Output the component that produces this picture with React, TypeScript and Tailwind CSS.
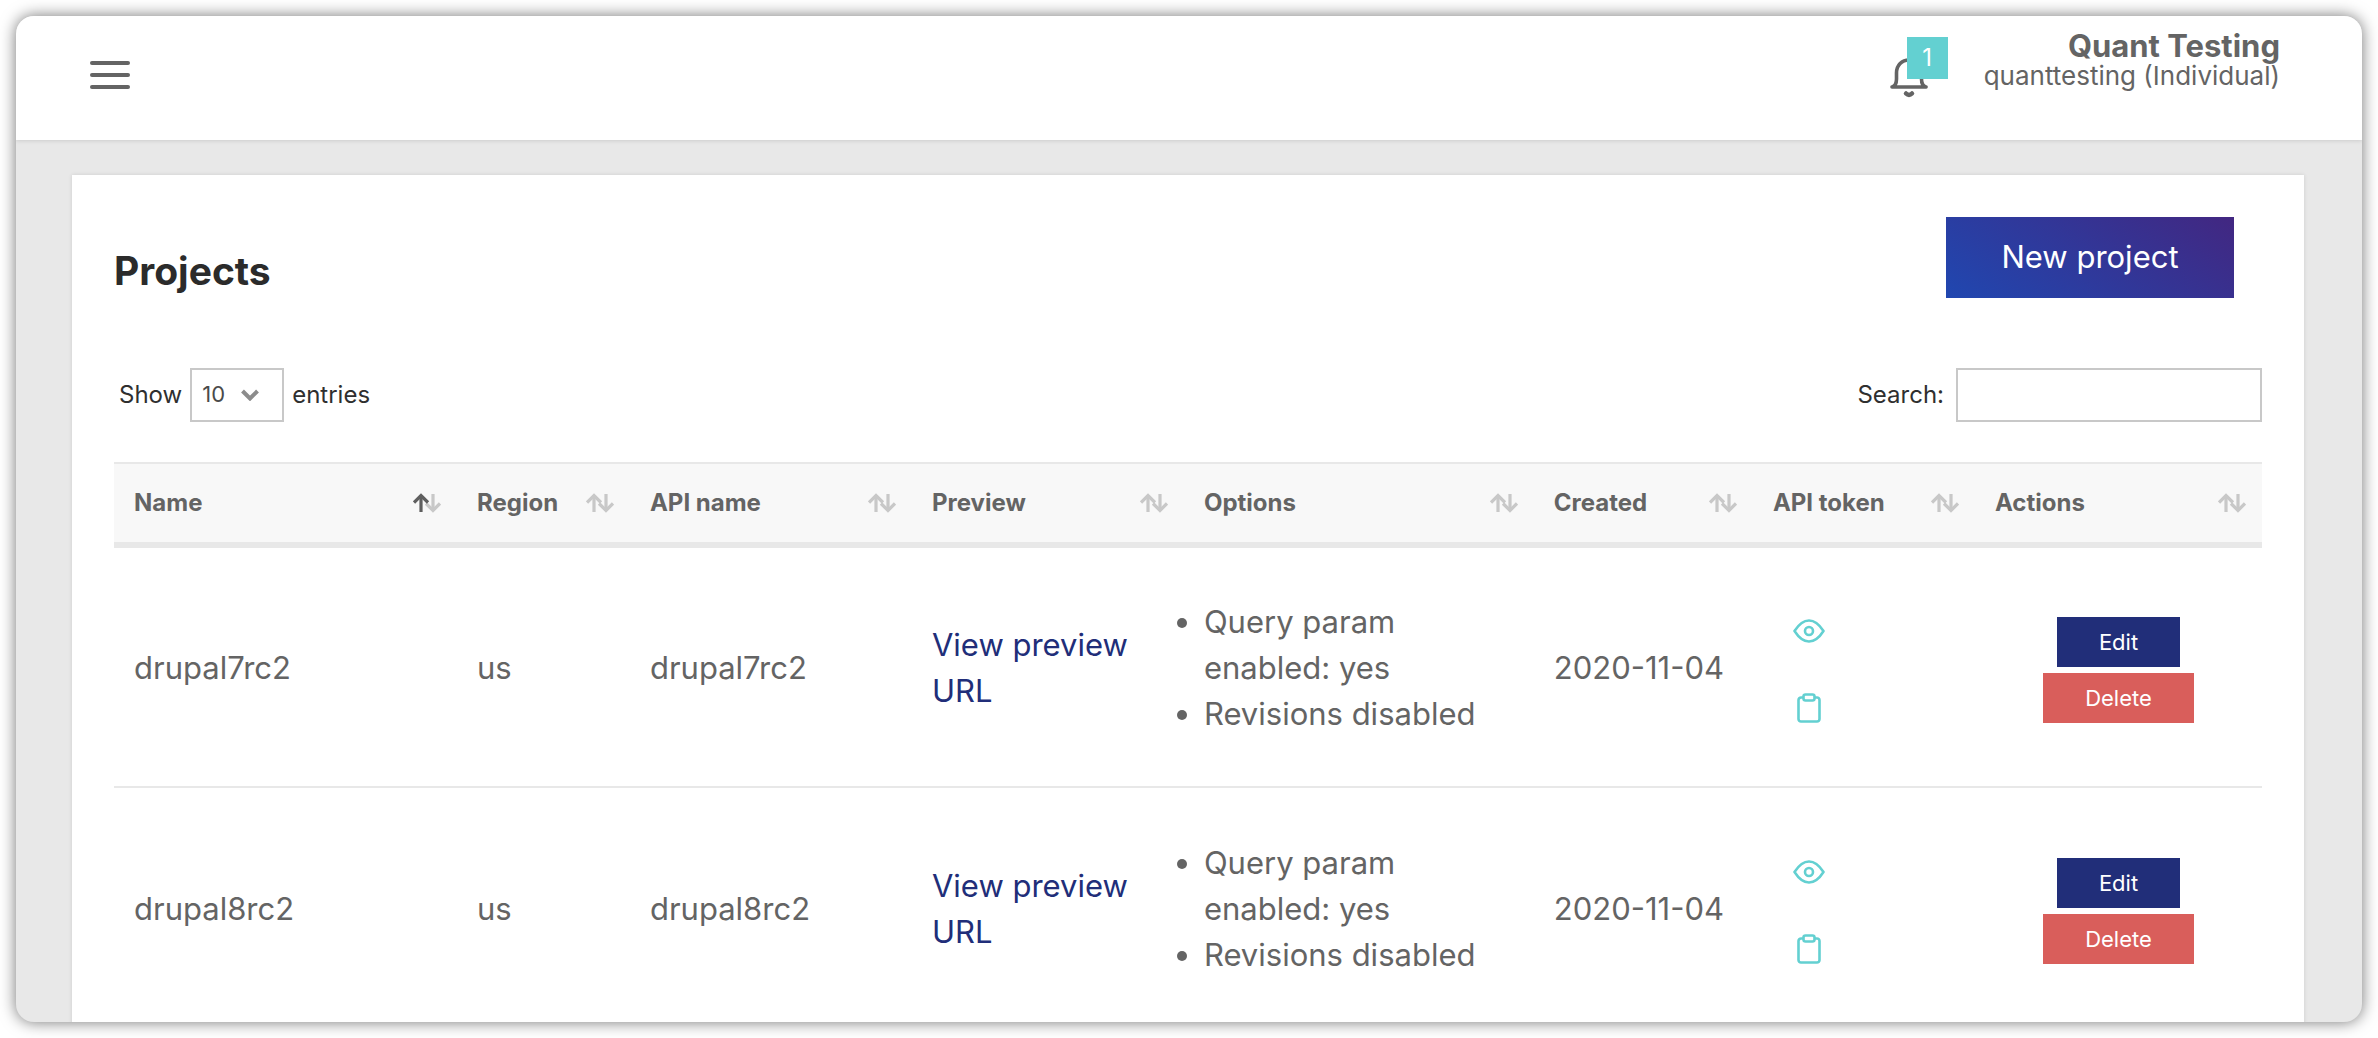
const columns = [
  { label: "Name", width: "w-[15.97%]", sorted: true },
  { label: "Region", width: "w-[8.05%]" },
  { label: "API name", width: "w-[13.13%]" },
  { label: "Preview", width: "w-[12.66%]" },
  { label: "Options", width: "w-[16.29%]" },
  { label: "Created", width: "w-[10.2%]" },
  { label: "API token", width: "w-[10.34%]" },
  { label: "Actions", width: "w-[13.36%]" },
];

const projects = [
  { name: "drupal7rc2", region: "us", api: "drupal7rc2", created: "2020-11-04" },
  { name: "drupal8rc2", region: "us", api: "drupal8rc2", created: "2020-11-04" },
];

function SortIcon({ active }: { active?: boolean }) {
  return (
    <svg viewBox="0 0 28 20" className="h-5 w-7 shrink-0" fill="none" strokeWidth="3.2" aria-hidden="true">
      <g stroke="#c8c8c8">
        <path d="M20 1V18" />
        <path d="M13 10.5L20 17.5L27 10.5" />
      </g>
      <g stroke={active ? "#5f5f5f" : "#c8c8c8"}>
        <path d="M8 19V2" />
        <path d="M1 9.5L8 2.5L15 9.5" />
      </g>
    </svg>
  );
}

function EyeIcon() {
  return (
    <svg viewBox="0 0 32 24" className="h-6 w-8" fill="none" stroke="#63d0d1" strokeWidth="2.6" aria-hidden="true">
      <path d="M1.5 12C6 5 10.5 1.500 16 1.500S26 5 30.500 12C26 19 21.500 22.500 16 22.500S6 19 1.500 12Z" strokeLinejoin="round" />
      <circle cx="16" cy="12" r="4" />
    </svg>
  );
}

function ClipboardIcon() {
  return (
    <svg viewBox="0 0 24 30" className="h-[30px] w-6" fill="none" stroke="#63d0d1" strokeWidth="2.6" aria-hidden="true">
      <path d="M6.500 4.500H4A2.500 2.500 0 0 0 1.500 7V26A2.500 2.500 0 0 0 4 28.500H20A2.500 2.500 0 0 0 22.500 26V7A2.500 2.500 0 0 0 20 4.500H17.500" />
      <rect x="6.500" y="1.500" width="11" height="6" rx="2" />
    </svg>
  );
}

function BellIcon() {
  return (
    <svg viewBox="0 0 38 40" className="h-10 w-[38px]" fill="none" stroke="#646464" strokeWidth="3.6" strokeLinecap="round" strokeLinejoin="round" aria-hidden="true">
      <path d="M2 29C6 28 6.500 25 6.500 21V15C6.500 7 12 2 19 2S31.500 7 31.500 15V21C31.500 25 32 28 36 29Z" />
      <path d="M16 35.500Q19 38.500 22 35.500" strokeWidth="4.500" />
    </svg>
  );
}

export default function App() {
  return (
    <div className="h-screen bg-white p-4 font-['Inter',sans-serif] text-[#646464]">
      <div className="flex h-full flex-col overflow-hidden rounded-[18px] bg-[#e8e8e8] shadow-[0_0_16px_rgba(0,0,0,0.55)]">
        <header className="flex h-[124px] shrink-0 items-start justify-between bg-white pr-[82px] pl-[74px] shadow-[0_1px_4px_rgba(0,0,0,0.12)]">
          <button type="button" aria-label="Menu" className="mt-[45px] flex w-10 flex-col gap-2">
            <span className="h-1 w-full rounded-full bg-[#646464]" />
            <span className="h-1 w-full rounded-full bg-[#646464]" />
            <span className="h-1 w-full rounded-full bg-[#646464]" />
          </button>
          <div className="flex items-start gap-14">
            <button type="button" aria-label="Notifications" className="relative mt-[42px]">
              <BellIcon />
              <span className="absolute -top-[21px] left-[17px] flex h-[42px] w-[41px] items-center justify-center bg-[#63d0d1] text-2xl text-white">
                1
              </span>
            </button>
            <div className="mt-[15px] text-right">
              <p className="text-[31px] leading-[30px] font-bold">Quant Testing</p>
              <p className="text-[26px] leading-[30px]">quanttesting (Individual)</p>
            </div>
          </div>
        </header>

        <main className="flex grow flex-col pt-[35px] pr-[58px] pl-14">
          <section className="grow bg-white px-[42px] pt-[42px] shadow-[0_0_4px_rgba(0,0,0,0.12)]">
            <div className="flex items-start justify-between pr-7">
              <h1 className="mt-8 text-[39px] leading-[44px] font-bold text-[#2b2b2b]">Projects</h1>
              <a
                href="#new"
                className="flex h-[81px] w-72 items-center justify-center bg-linear-[35deg,#2047b0,#422781] text-[31px] text-white"
              >
                New project
              </a>
            </div>

            <div className="mt-[70px] flex items-center justify-between text-2xl text-[#2f2f2f]">
              <div className="flex items-center gap-2 pl-[5px]">
                <label htmlFor="entries">Show</label>
                <span className="relative">
                  <select
                    id="entries"
                    defaultValue="10"
                    className="block h-[54px] w-[94px] appearance-none border-2 border-[#c8c8c8] bg-white pl-2.5 text-[22px] text-[#4a4a4a]"
                  >
                    <option>10</option>
                    <option>25</option>
                    <option>50</option>
                    <option>100</option>
                  </select>
                  <svg
                    viewBox="0 0 18 12"
                    className="pointer-events-none absolute top-[21px] left-[51px] h-3 w-[18px]"
                    fill="none"
                    stroke="#8c8c8c"
                    strokeWidth="4"
                    aria-hidden="true"
                  >
                    <path d="M1.500 2L9 9.500L16.500 2" />
                  </svg>
                </span>
                <span>entries</span>
              </div>
              <div className="flex items-center gap-3">
                <label htmlFor="search">Search:</label>
                <input id="search" type="search" className="h-[54px] w-[306px] border-2 border-[#c8c8c8] bg-white px-3" />
              </div>
            </div>

            <table className="mt-10 w-full table-fixed border-collapse text-left">
              <thead>
                <tr className="border-t-2 border-b-6 border-[#e8e8e8] bg-[#f8f8f8]">
                  {columns.map((c) => (
                    <th key={c.label} scope="col" className={`${c.width} h-[82px] pr-4 pl-5 text-2xl font-bold`}>
                      <div className="flex items-center justify-between">
                        {c.label}
                        <SortIcon active={c.sorted} />
                      </div>
                    </th>
                  ))}
                </tr>
              </thead>
              <tbody className="text-[31px] leading-[46px]">
                {projects.map((p) => (
                  <tr key={p.name} className="border-b-2 border-[#e8e8e8]">
                    <td className="h-[242px] pt-0.5 pl-5">{p.name}</td>
                    <td className="pt-0.5 pl-5">{p.region}</td>
                    <td className="pt-0.5 pl-5">{p.api}</td>
                    <td className="pt-0.5 pr-5 pl-5">
                      <a href="#preview" className="text-[#212e79]">
                        View preview URL
                      </a>
                    </td>
                    <td className="pt-0.5 pr-5 pl-5">
                      <ul className="list-disc">
                        <li>
                          Query param
                          <br />
                          enabled: yes
                        </li>
                        <li>Revisions disabled</li>
                      </ul>
                    </td>
                    <td className="pt-0.5 pl-5">{p.created}</td>
                    <td className="pt-2 pl-10">
                      <div className="flex flex-col items-start gap-[50px]">
                        <button type="button" aria-label="Show token">
                          <EyeIcon />
                        </button>
                        <button type="button" aria-label="Copy token" className="px-1">
                          <ClipboardIcon />
                        </button>
                      </div>
                    </td>
                    <td className="pt-1.5">
                      <div className="flex flex-col items-center gap-1.5 text-[22px] leading-[50px] text-white">
                        <button type="button" className="bg-[#212e79] px-[42px]">
                          Edit
                        </button>
                        <button type="button" className="bg-[#d95e5b] px-[42px]">
                          Delete
                        </button>
                      </div>
                    </td>
                  </tr>
                ))}
              </tbody>
            </table>
          </section>
        </main>
      </div>
    </div>
  );
}
